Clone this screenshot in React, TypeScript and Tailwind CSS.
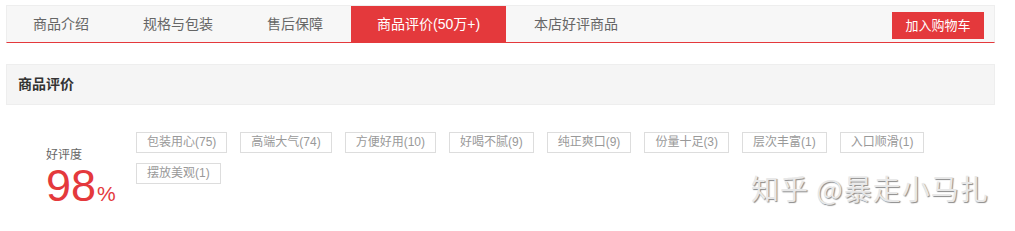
import React from 'react'

const TABS = [
  { label: '商品介绍' },
  { label: '规格与包装' },
  { label: '售后保障' },
  { label: '商品评价(50万+)', active: true },
  { label: '本店好评商品' },
]

const TAGS = [
  '包装用心(75)',
  '高端大气(74)',
  '方便好用(10)',
  '好喝不腻(9)',
  '纯正爽口(9)',
  '份量十足(3)',
  '层次丰富(1)',
  '入口顺滑(1)',
  '摆放美观(1)',
]

export default function App() {
  return (
    <div className="relative w-[1015px] h-[231px] bg-white overflow-hidden font-['Liberation_Sans','Noto_Sans_CJK_SC',sans-serif]">
      <div className="pl-[6px] pt-[5px] w-[995px]">
        {/* Tab bar */}
        <div className="flex items-stretch h-[38px] bg-[#f7f7f7] border border-[#eeeeee] border-b-[#e4393c]">
          <ul className="flex gap-[2px] list-none">
            {TABS.map(tab => (
              <li
                key={tab.label}
                className={`flex items-center px-[26px] text-[14px] leading-none ${
                  tab.active ? 'bg-[#e4393c] text-white' : 'text-[#666666]'
                }`}
              >
                {tab.label}
              </li>
            ))}
          </ul>
          <div className="ml-auto flex items-center pr-[10px] pt-[3px]">
            <button className="w-[92px] h-[27px] bg-[#e4393c] text-white text-[13px] leading-none">
              加入购物车
            </button>
          </div>
        </div>

        {/* Section header */}
        <div className="mt-[21px] h-[41px] flex items-center pl-[11px] bg-[#f5f5f5] border border-[#eeeeee]">
          <span className="text-[14px] font-bold text-[#333333]">商品评价</span>
        </div>

        {/* Rating */}
        <div className="flex mt-[27px]">
          <div className="w-[130px] shrink-0 pl-[40px] pt-[14px]">
            <div className="text-[12px] leading-[18px] text-[#666666]">好评度</div>
            <div className="flex items-baseline text-[#e4393c] -mt-[2px]">
              <span className="text-[45px] leading-[48px]">98</span>
              <span className="text-[21px] ml-[1px]">%</span>
            </div>
          </div>
          <div className="flex flex-wrap gap-x-[13px] gap-y-[10px] content-start">
            {TAGS.map(tag => (
              <span
                key={tag}
                className="h-[21px] px-[10px] border border-[#dddddd] text-[12px] leading-[19px] text-[#999999]"
              >
                {tag}
              </span>
            ))}
          </div>
        </div>
      </div>

      {/* Watermark */}
      <div className="absolute left-[751px] top-[168px] text-[28px] leading-[40px] text-[#e8e8e8] tracking-[1px] [text-shadow:1px_1px_1px_#8a8a8a] font-['Noto_Sans_CJK_SC',sans-serif]">
        知乎 @暴走小马扎
      </div>
    </div>
  )
}
